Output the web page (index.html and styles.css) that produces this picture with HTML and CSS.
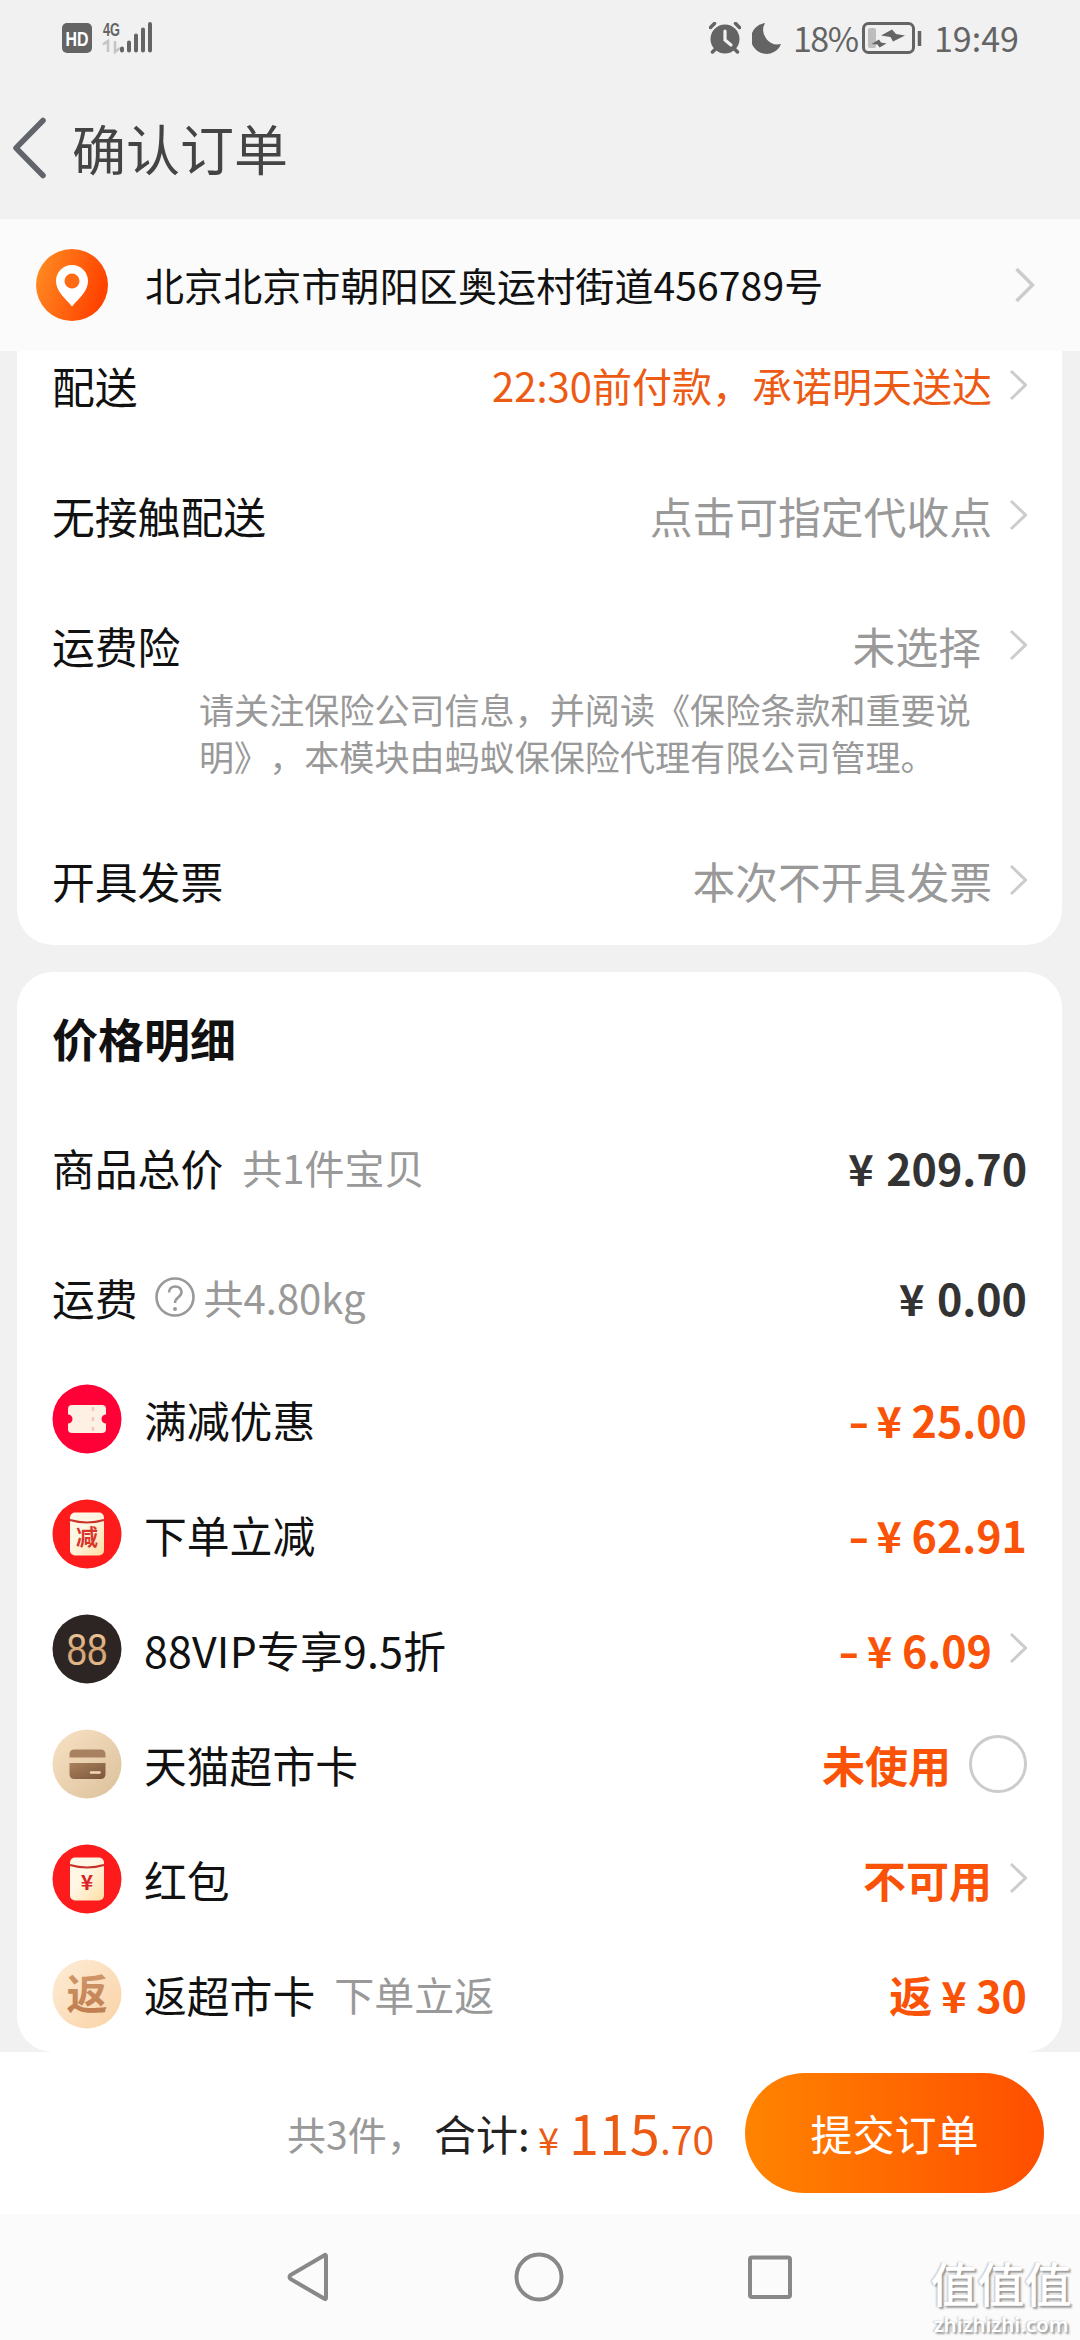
FILE: index.html
```html
<!DOCTYPE html>
<html lang="zh-CN">
<head>
<meta charset="utf-8">
<title>确认订单</title>
<link rel="stylesheet" href="styles.css">
</head>
<body>
<div class="screen">
  <div class="status">
    <svg class="status-left" width="92" height="40" viewBox="0 -6 92 40">
      <rect x="0" y="3" width="30" height="30" rx="5" fill="#646464"/>
      <text x="15" y="25.500" text-anchor="middle" textLength="23" lengthAdjust="spacingAndGlyphs" class="hd">HD</text>
      <text x="41" y="16" textLength="17" lengthAdjust="spacingAndGlyphs" class="net">4G</text>
      <path d="M41 24.500l5-3.500v11M53 21v11l5-4" fill="none" stroke="#c4c4c4" stroke-width="2.500"/>
      <path d="M60 28.500v2M67 22.500v8M74 15.500v15M81 9.500v21M88 4v26.500" stroke="#646464" stroke-width="4" stroke-linecap="round"/>
    </svg>
    <div class="status-right">
      <svg class="alarm" width="32" height="32" viewBox="0 0 32 32">
        <circle cx="16" cy="17" r="14.500" fill="#646464"/>
        <path d="M1.500 5.500l4-4M30.500 5.500l-4-4M3.500 30l4-4M28.500 30l-4-4" stroke="#646464" stroke-width="3.500" stroke-linecap="round"/>
        <path d="M16 9v9l6 5" fill="none" stroke="#f1f1f1" stroke-width="3.200" stroke-linecap="round"/>
      </svg>
      <svg class="moon" width="30" height="32" viewBox="0 0 30 32"><path d="M13 1A15.500 15.500 0 1 0 29 22 14.500 14.500 0 0 1 13 1z" fill="#646464"/></svg>
      <span class="percent">18%</span>
      <svg class="battery" width="60" height="32" viewBox="0 0 60 32">
        <rect x="1.500" y="1.500" width="50" height="29" rx="5" fill="none" stroke="#646464" stroke-width="3"/>
        <rect x="6" y="6" width="8" height="20" rx="2" fill="#bdbdbd"/>
        <path d="M30 7.500l4 4.500 9 1.500-12 6-2.500-4.500-9.500-1.500zM17 17.500l2 3 5.500 1-7 4-2-3-6-.500z" fill="#646464"/>
        <path d="M57.500 9v15" stroke="#646464" stroke-width="3.500"/>
      </svg>
      <span class="clock">19:49</span>
    </div>
  </div>

  <header class="header">
    <svg class="back" width="36" height="64" viewBox="0 0 36 64"><path d="M33 4.500L6 32l27 27.500" fill="none" stroke="#62646c" stroke-width="5.500" stroke-linecap="round" stroke-linejoin="round"/></svg>
    <h1 class="title">确认订单</h1>
  </header>

  <section class="address">
    <svg class="pin" width="72" height="72" viewBox="0 0 72 72">
      <defs><linearGradient id="pin-fill" x1="0" y1="0" x2="1" y2="0.300"><stop offset="0" stop-color="#ff9024"/><stop offset="1" stop-color="#ff4400"/></linearGradient></defs>
      <circle cx="36" cy="36" r="36" fill="url(#pin-fill)"/>
      <path d="M36 16c-9 0-16 7-16 16 0 10 8 16 16 25.500C44 48 52 42 52 32c0-9-7-16-16-16z" fill="#fff"/>
      <circle cx="36" cy="32" r="7.500" fill="#ff6a14"/>
    </svg>
    <span class="address-text">北京北京市朝阳区奥运村街道456789号</span>
    <svg class="address-arrow" width="22" height="38" viewBox="0 0 22 38"><path d="M2.500 3L18.500 19 2.500 35" fill="none" stroke="#ccc" stroke-width="3.500"/></svg>
  </section>

  <main class="content">
    <section class="card delivery">
      <div class="row"><span class="label">配送</span><span class="promise">22:30前付款，承诺明天送达</span><svg class="arrow" viewBox="0 0 18 32"><path d="M2 2L16.500 16 2 30"/></svg></div>
      <div class="row"><span class="label">无接触配送</span><span class="choice">点击可指定代收点</span><svg class="arrow" viewBox="0 0 18 32"><path d="M2 2L16.500 16 2 30"/></svg></div>
      <div class="row"><span class="label">运费险</span><span class="choice unselected">未选择</span><svg class="arrow" viewBox="0 0 18 32"><path d="M2 2L16.500 16 2 30"/></svg></div>
      <p class="note">请关注保险公司信息，并阅读《保险条款和重要说<br>明》，本模块由蚂蚁保保险代理有限公司管理。</p>
      <div class="row"><span class="label">开具发票</span><span class="choice">本次不开具发票</span><svg class="arrow" viewBox="0 0 18 32"><path d="M2 2L16.500 16 2 30"/></svg></div>
    </section>

    <section class="card prices">
      <h2 class="card-title">价格明细</h2>
      <div class="row"><span class="label">商品总价</span><span class="hint">共1件宝贝</span><span class="amount"><span class="yen wide">¥</span>209.70</span></div>
      <div class="row"><span class="label">运费</span>
        <svg class="help" width="40" height="40" viewBox="0 0 40 40"><circle cx="20" cy="20" r="18.500"/><path d="M14 15.500c0-8 12.500-8 12.500-.500 0 5.500-6.500 5-6.500 11"/><circle class="dot" cx="20" cy="32" r="2"/></svg>
        <span class="weight">共4.80kg</span><span class="amount"><span class="yen wide">¥</span>0.00</span></div>

      <div class="deal">
        <svg class="badge" viewBox="0 0 70 70"><circle cx="35" cy="35" r="34.500" fill="#ff0037"/><path d="M20 21h30q4 0 4 4v5.500a4.500 4.500 0 0 0 0 9V45q0 4-4 4H20q-4 0-4-4v-5.500a4.500 4.500 0 0 0 0-9V25q0-4 4-4z" fill="#fff0e4"/><path d="M41 23v4M41 33v4M41 43v4" stroke="#f3c7b8" stroke-width="2.500"/></svg>
        <span class="label">满减优惠</span><span class="amount off"><span class="minus">-</span><span class="yen">¥</span>25.00</span>
      </div>
      <div class="deal">
        <svg class="badge" viewBox="0 0 70 70"><defs><linearGradient id="cream" x1="0" y1="0" x2="1" y2="1"><stop offset=".4" stop-color="#fff7e6"/><stop offset="1" stop-color="#ffdda2"/></linearGradient></defs><circle cx="35" cy="35" r="34.500" fill="#fe1b1b"/><rect x="18" y="13.500" width="34" height="43" rx="5" fill="url(#cream)"/><path d="M18 21q17 5 34 0" fill="none" stroke="#c9322a" stroke-width="2"/><text x="35" y="46" text-anchor="middle" class="badge-cut">减</text></svg>
        <span class="label">下单立减</span><span class="amount off"><span class="minus">-</span><span class="yen">¥</span>62.91</span>
      </div>
      <div class="deal">
        <svg class="badge" viewBox="0 0 70 70"><defs><linearGradient id="gold" x1="0" y1="0" x2="0" y2="1"><stop offset="0" stop-color="#fbd9ac"/><stop offset=".55" stop-color="#d0a071"/><stop offset="1" stop-color="#efc79b"/></linearGradient></defs><circle cx="35" cy="35" r="34.500" fill="#2d2523"/><text x="35" y="50.500" text-anchor="middle" textLength="41" lengthAdjust="spacingAndGlyphs" class="badge-vip" fill="url(#gold)">88</text></svg>
        <span class="label vip">88VIP专享9.5折</span><span class="amount off"><span class="minus">-</span><span class="yen">¥</span>6.09</span><svg class="arrow" viewBox="0 0 18 32"><path d="M2 2L16.500 16 2 30"/></svg>
      </div>
      <div class="deal">
        <svg class="badge" viewBox="0 0 70 70"><defs><linearGradient id="sand" x1="0" y1="0" x2="1" y2="1"><stop offset="0" stop-color="#f8e2c4"/><stop offset="1" stop-color="#dcc09b"/></linearGradient><linearGradient id="brown" x1="0" y1="0" x2="1" y2="1"><stop offset="0" stop-color="#a9835b"/><stop offset="1" stop-color="#7b553c"/></linearGradient></defs><circle cx="35" cy="35" r="34.500" fill="url(#sand)"/><path d="M17.500 28.500v-3q0-5 5-5h26q5 0 5 5v3z" fill="#a88260"/><path d="M17.500 34h36v11q0 5-5 5h-26q-5 0-5-5z" fill="url(#brown)"/><path d="M39 43.500h8.500" stroke="#f3d8b5" stroke-width="2.500" stroke-linecap="round"/></svg>
        <span class="label">天猫超市卡</span><span class="amount off unused">未使用</span><span class="radio"></span>
      </div>
      <div class="deal">
        <svg class="badge" viewBox="0 0 70 70"><circle cx="35" cy="35" r="34.500" fill="#fe1b1b"/><rect x="18" y="13.500" width="34" height="43" rx="5" fill="url(#cream)"/><path d="M18 21q17 5 34 0" fill="none" stroke="#c9322a" stroke-width="2"/><text x="35" y="46" text-anchor="middle" class="badge-yen">¥</text></svg>
        <span class="label">红包</span><span class="amount off">不可用</span><svg class="arrow" viewBox="0 0 18 32"><path d="M2 2L16.500 16 2 30"/></svg>
      </div>
      <div class="deal">
        <svg class="badge" viewBox="0 0 70 70"><defs><linearGradient id="peach" x1="0" y1="0" x2="1" y2="1"><stop offset="0" stop-color="#fdedd8"/><stop offset="1" stop-color="#fad2a4"/></linearGradient><linearGradient id="copper" x1="0" y1="0" x2="0" y2="1"><stop offset="0" stop-color="#d49e70"/><stop offset="1" stop-color="#bd794c"/></linearGradient></defs><circle cx="35" cy="35" r="34.500" fill="url(#peach)"/><text x="35" y="50" text-anchor="middle" class="badge-back" fill="url(#copper)">返</text></svg>
        <span class="label">返超市卡</span><span class="hint">下单立返</span><span class="amount off">返<span class="yen after">¥</span>30</span>
      </div>
    </section>
  </main>

  <footer class="checkout">
    <span class="count">共3件，</span>
    <span class="total-label">合计:</span>
    <span class="total"><span class="total-yen">¥</span><span class="total-int">115</span><span class="total-dec">.70</span></span>
    <button class="submit">提交订单</button>
  </footer>

  <nav class="navbar">
    <svg width="46" height="52" viewBox="0 0 46 52"><path d="M40 5v42q0 2-2 .500L4.500 28q-2-2 0-4L38 4.500q2-1.500 2 .500z"/></svg>
    <svg width="52" height="52" viewBox="0 0 52 52"><circle cx="26" cy="26" r="22.500"/></svg>
    <svg width="48" height="48" viewBox="0 0 48 48"><rect x="4" y="4.500" width="40" height="39.500" rx="2"/></svg>
  </nav>
  <div class="watermark">
    <span class="watermark-name">值值值</span>
    <span class="watermark-site">zhizhizhi.com</span>
  </div>
</div>
</body>
</html>
```

FILE: styles.css
```css
* { box-sizing: border-box; }

body {
  margin: 0;
  background: #f1f1f1;
  font-family: "Noto Sans CJK SC", sans-serif;
  color: #111;
  text-spacing-trim: space-all;
}

.screen {
  position: relative;
  display: flex;
  flex-direction: column;
  width: 1080px;
  height: 2340px;
  overflow: hidden;
}

/* Status bar */
.status {
  display: flex;
  justify-content: space-between;
  align-items: flex-start;
  height: 80px;
  padding: 20px 62px 0;
}
.status-left { margin-top: -6px; overflow: visible; }
.hd { font: 700 20px "Liberation Sans", sans-serif; fill: #fff; }
.net { font: 700 19px "Liberation Sans", sans-serif; fill: #646464; }
.status-right {
  display: flex;
  align-items: center;
  margin-top: 1px;
  height: 34px;
  font-size: 34px;
  line-height: 34px;
  color: #646464;
}
.moon { margin-left: 11px; }
.percent { width: 62px; margin: -1px 0 0 11px; letter-spacing: -1.500px; }
.battery { margin-left: 7px; }
.clock { width: 84px; margin: -1px 0 0 12px; }

/* Page header */
.header {
  display: flex;
  align-items: center;
  height: 139px;
  padding: 0 10px;
}
.back { margin-top: -4px; }
.title {
  margin: -4px 0 0 26px;
  font-size: 54px;
  font-weight: 400;
  line-height: 80px;
  color: #444;
}

/* Address */
.address {
  display: flex;
  align-items: center;
  height: 132px;
  padding: 0 44px 0 36px;
  background: #fbfbfb;
}
.address-text {
  flex: 1;
  margin: -3px 0 0 37px;
  font-size: 39px;
  line-height: 56px;
  letter-spacing: .12px;
}

/* Cards */
.content {
  display: flex;
  flex-direction: column;
  gap: 27px;
  height: 1701px;
  padding: 0 18px 0 17px;
}
.card { padding: 0 35px; background: #fff; }
.delivery { height: 594px; padding-top: 4px; border-radius: 0 0 36px 36px; }
.prices { height: 1080px; padding-top: 30px; border-radius: 36px; }
.row, .deal { display: flex; align-items: center; white-space: nowrap; }
.row { height: 60px; margin-bottom: 70px; }
.label { font-size: 42.800px; line-height: 60px; }
.vip { letter-spacing: .25px; }
.promise { margin-left: auto; font-size: 40px; color: #ec5a14; }
.choice { margin-left: auto; font-size: 42.800px; color: #999; }
.unselected { margin-right: 11px; }
.arrow {
  flex: none;
  width: 18px;
  height: 32px;
  margin: -1px 0 0 17px;
  fill: none;
  stroke: #ccc;
  stroke-width: 3;
}
.note {
  margin: -59px 0 65px 147px;
  height: 99px;
  font-size: 35.100px;
  line-height: 46.500px;
  color: #999;
  white-space: nowrap;
}
.card-title { margin: 0 0 65px; font-size: 46px; font-weight: 700; line-height: 70px; }
.hint { margin-left: 19px; font-size: 40px; color: #999; }
.weight { margin-left: 9px; font-size: 40px; color: #999; }
.help { margin: -1px 0 0 17px; fill: none; stroke: #999; stroke-width: 2.600; }
.help .dot { fill: #999; stroke: none; }
.prices .row:nth-of-type(2) { margin-bottom: 34px; }

.amount { margin-left: auto; font-size: 43px; font-weight: 700; color: #333; }
.yen { display: inline-block; width: 25px; margin-right: 10px; }
.yen.wide { margin-right: 13px; }
.yen.after { margin-left: 9px; }
.minus { display: inline-block; width: 27px; transform: scaleX(1.350); transform-origin: 6px 50%; }
.off { color: #fa5207; }

.deal { height: 115px; }
.badge { flex: none; width: 70px; height: 70px; margin: 1px 22px 0 0; }
.unused { margin-right: 18px; }
.radio { width: 58px; height: 58px; margin-top: 1px; border: 3px solid #ccc; border-radius: 50%; }
.badge-cut { font-size: 22px; font-weight: 700; fill: #d8342a; }
.badge-vip { font-family: "Liberation Sans", sans-serif; font-size: 44px; }
.badge-yen { font-size: 21px; font-weight: 700; fill: #d9232b; }
.badge-back { font-size: 41px; font-weight: 700; }

/* Checkout bar */
.checkout {
  display: flex;
  align-items: center;
  height: 162px;
  padding: 0 36px 0 287px;
  background: #fff;
  white-space: nowrap;
}
.count { width: 147px; font-size: 39px; color: #999; }
.total-label { width: 104px; margin-top: -2px; font-size: 42px; color: #222; }
.total { flex: 1; padding-top: 14px; color: #ec5a14; line-height: 80px; }
.total-yen { font-size: 38px; }
.total-int { margin-left: 10px; font-size: 54px; letter-spacing: .3px; }
.total-dec { font-size: 39px; }
.submit {
  width: 299px;
  height: 120px;
  padding: 0;
  border: 0;
  border-radius: 60px;
  background: linear-gradient(90deg, #ff8400, #ff4e00);
  font: 400 42px/60px "Noto Sans CJK SC", sans-serif;
  color: #fff;
}

/* System navigation */
.navbar {
  display: flex;
  align-items: center;
  justify-content: space-between;
  height: 126px;
  padding: 0 286px;
  background: #fbfbfb;
}
.navbar svg { fill: none; stroke: #888; stroke-width: 4; }

.watermark {
  position: absolute;
  right: 6px;
  bottom: 3px;
  display: flex;
  flex-direction: column;
  align-items: center;
  width: 146px;
  color: #fff;
  white-space: nowrap;
  text-shadow: 2px 2px 2px #999, -1px 0 2px #bbb;
}
.watermark-name { font-size: 47px; font-weight: 500; line-height: 58px; }
.watermark-site { font: 600 20.500px/26px "Noto Sans", sans-serif; }
```
